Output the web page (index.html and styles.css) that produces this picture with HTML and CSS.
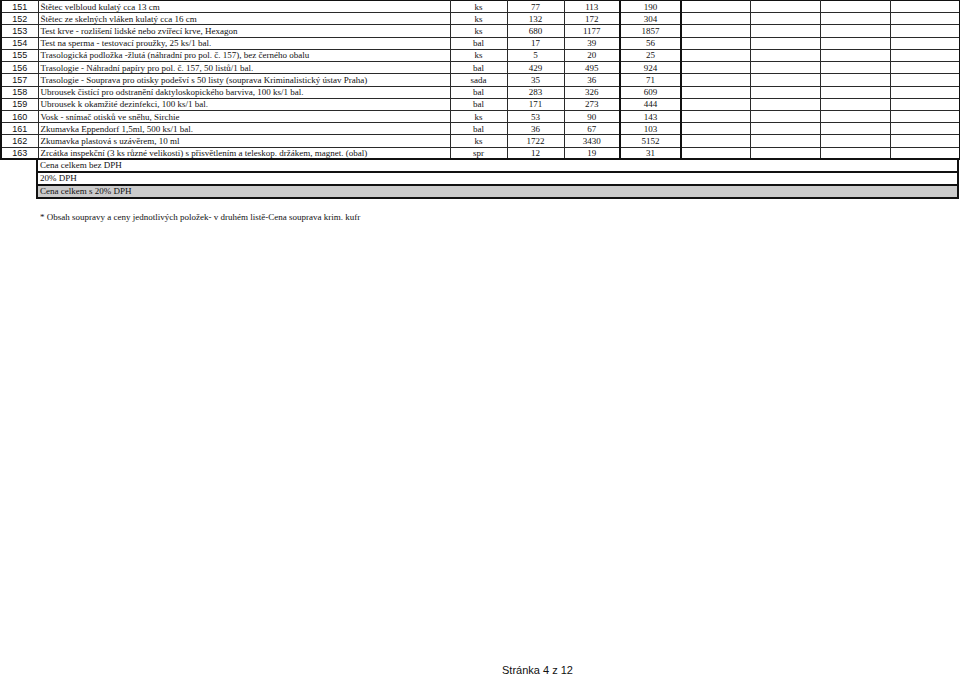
FILE: index.html
```html
<!DOCTYPE html>
<html lang="cs">
<head>
<meta charset="utf-8">
<link rel="stylesheet" href="styles.css">
</head>
<body>
<div class="page">
<table class="items">
<colgroup>
<col class="c-no"><col class="c-desc"><col class="c-unit"><col class="c-q1"><col class="c-q2"><col class="c-tot"><col class="c-e1"><col class="c-e2"><col class="c-e3"><col class="c-e4">
</colgroup>
<tbody>
<tr><td class="no">151</td><td class="desc">Štětec velbloud kulatý cca 13 cm</td><td>ks</td><td>77</td><td>113</td><td class="tot">190</td><td class="e1"></td><td></td><td></td><td class="last"></td></tr>
<tr><td class="no">152</td><td class="desc">Štětec ze skelných vláken kulatý cca 16 cm</td><td>ks</td><td>132</td><td>172</td><td class="tot">304</td><td class="e1"></td><td></td><td></td><td class="last"></td></tr>
<tr><td class="no">153</td><td class="desc">Test krve - rozlišení lidské nebo zvířecí krve, Hexagon</td><td>ks</td><td>680</td><td>1177</td><td class="tot">1857</td><td class="e1"></td><td></td><td></td><td class="last"></td></tr>
<tr><td class="no">154</td><td class="desc">Test na sperma - testovací proužky, 25 ks/1 bal.</td><td>bal</td><td>17</td><td>39</td><td class="tot">56</td><td class="e1"></td><td></td><td></td><td class="last"></td></tr>
<tr><td class="no">155</td><td class="desc">Trasologická podložka -žlutá (náhradní pro pol. č. 157), bez černého obalu</td><td>ks</td><td>5</td><td>20</td><td class="tot">25</td><td class="e1"></td><td></td><td></td><td class="last"></td></tr>
<tr><td class="no">156</td><td class="desc">Trasologie - Náhradní papíry pro pol. č. 157, 50 listů/1 bal.</td><td>bal</td><td>429</td><td>495</td><td class="tot">924</td><td class="e1"></td><td></td><td></td><td class="last"></td></tr>
<tr><td class="no">157</td><td class="desc">Trasologie - Souprava pro otisky podešví s 50 listy (souprava Kriminalistický ústav Praha)</td><td>sada</td><td>35</td><td>36</td><td class="tot">71</td><td class="e1"></td><td></td><td></td><td class="last"></td></tr>
<tr><td class="no">158</td><td class="desc">Ubrousek čistící pro odstranění daktyloskopického barviva, 100 ks/1 bal.</td><td>bal</td><td>283</td><td>326</td><td class="tot">609</td><td class="e1"></td><td></td><td></td><td class="last"></td></tr>
<tr><td class="no">159</td><td class="desc">Ubrousek k okamžité dezinfekci, 100 ks/1 bal.</td><td>bal</td><td>171</td><td>273</td><td class="tot">444</td><td class="e1"></td><td></td><td></td><td class="last"></td></tr>
<tr><td class="no">160</td><td class="desc">Vosk - snímač otisků ve sněhu, Sirchie</td><td>ks</td><td>53</td><td>90</td><td class="tot">143</td><td class="e1"></td><td></td><td></td><td class="last"></td></tr>
<tr><td class="no">161</td><td class="desc">Zkumavka Eppendorf 1,5ml, 500 ks/1 bal.</td><td>bal</td><td>36</td><td>67</td><td class="tot">103</td><td class="e1"></td><td></td><td></td><td class="last"></td></tr>
<tr><td class="no">162</td><td class="desc">Zkumavka plastová s uzávěrem, 10 ml</td><td>ks</td><td>1722</td><td>3430</td><td class="tot">5152</td><td class="e1"></td><td></td><td></td><td class="last"></td></tr>
<tr class="final"><td class="no">163</td><td class="desc">Zrcátka inspekční (3 ks různé velikosti) s přisvětlením a teleskop. držákem, magnet. (obal)</td><td>spr</td><td>12</td><td>19</td><td class="tot">31</td><td class="e1"></td><td></td><td></td><td class="last"></td></tr>
</tbody>
</table>
<div class="summary">
<div class="sum-row">Cena celkem bez DPH</div>
<div class="sum-row">20% DPH</div>
<div class="sum-row grey">Cena celkem s 20% DPH</div>
</div>
<p class="note">* Obsah soupravy a ceny jednotlivých položek- v druhém listě-Cena souprava krim. kufr</p>
<footer class="pager">Stránka 4 z 12</footer>
</div>
</body>
</html>
```

FILE: styles.css
```css
html, body {
  margin: 0;
  padding: 0;
  background: #ffffff;
}

.page {
  height: 676px;
  display: flex;
  flex-direction: column;
  color: #111;
  font-family: "Liberation Serif", "Times New Roman", serif;
}

.items {
  width: 959px;
  table-layout: fixed;
  border-collapse: collapse;
  font-size: 9px;
}

.c-no { width: 37px; }
.c-desc { width: 412px; }
.c-unit { width: 57px; }
.c-q1 { width: 57px; }
.c-q2 { width: 56px; }
.c-tot { width: 61px; }
.c-e1 { width: 69px; }
.c-e2 { width: 70px; }
.c-e3 { width: 70px; }
.c-e4 { width: 70px; }

.items tr {
  height: 12.23px;
}

.items td {
  padding: 0;
  line-height: 10px;
  border: 1px solid #2a2a2a;
  text-align: center;
  vertical-align: middle;
  white-space: nowrap;
  overflow: hidden;
}

.items td.no {
  border-left: 2px solid #111;
  font-family: "Liberation Sans", Arial, sans-serif;
  font-size: 9px;
}

.items td.desc {
  text-align: left;
  padding-left: 2px;
}

.items td.tot {
  border-left: 2px solid #111;
}

.items td.e1 {
  border-left: 2px solid #111;
}

.items td.last {
  border-right: 2px solid #111;
}

.items tr:first-child td {
  border-top: 1px solid #111;
}

.items tr.final td {
  border-bottom: 2px solid #111;
}

.summary {
  margin-left: 36px;
  width: 923px;
  display: flex;
  flex-direction: column;
  font-size: 9px;
}

.sum-row {
  height: 11px;
  line-height: 11px;
  padding-left: 2px;
  border: 2px solid #111;
  border-top: 0;
}

.sum-row.grey {
  background: #cbcbcb;
}

.note {
  margin: 13px 0 0 40px;
  font-size: 9px;
  line-height: 11px;
}

.pager {
  margin-top: auto;
  padding: 0 0 0 502px;
  height: 11px;
  font-family: "Liberation Sans", Arial, sans-serif;
  font-size: 11px;
  line-height: 11px;
}
```
